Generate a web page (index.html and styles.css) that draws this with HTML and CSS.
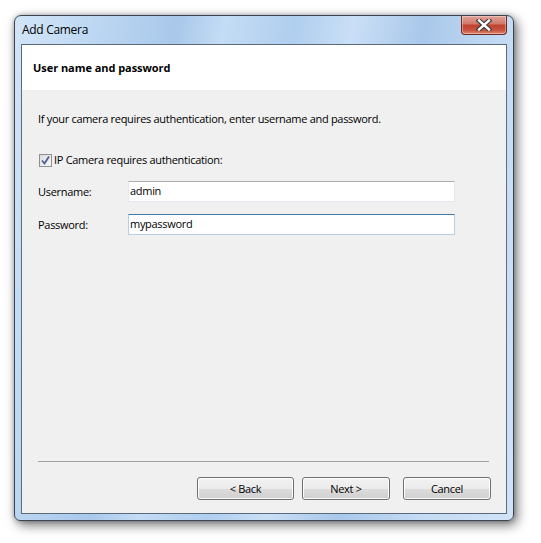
FILE: index.html
```html
<!DOCTYPE html>
<html>
<head>
<meta charset="utf-8">
<link rel="stylesheet" href="styles.css">
</head>
<body>
<div class="window">
  <div class="titlebar">
    <span class="title">Add Camera</span>
    <div class="close">
      <svg width="16" height="12" viewBox="0 0 16 12">
        <path d="M3 1.5 L13 10.5 M13 1.5 L3 10.5" stroke="#3a3a3a" stroke-width="4.6" stroke-linecap="square"/>
        <path d="M3 1.5 L13 10.5 M13 1.5 L3 10.5" stroke="#ffffff" stroke-width="2.4" stroke-linecap="square"/>
      </svg>
    </div>
  </div>
  <div class="client">
    <div class="header">User name and password</div>
    <div class="body">
      <p class="desc">If your camera requires authentication, enter username and password.</p>
      <label class="check-row">
        <span class="checkbox">
          <svg width="13" height="13" viewBox="0 0 13 13">
            <path d="M3 6.5 L5.5 9.5 L10 2.5" fill="none" stroke="#4b5f95" stroke-width="1.8"/>
          </svg>
        </span>
        <span>IP Camera requires authentication:</span>
      </label>
      <div class="field">
        <span class="label">Username:</span>
        <div class="input">admin</div>
      </div>
      <div class="field">
        <span class="label">Password:</span>
        <div class="input focused">mypassword</div>
      </div>
      <div class="spacer"></div>
      <div class="separator"></div>
      <div class="buttons">
        <div class="btn back">&lt; Back</div>
        <div class="btn next">Next &gt;</div>
        <div class="btn cancel">Cancel</div>
      </div>
    </div>
  </div>
</div>
</body>
</html>
```
FILE: styles.css
```css
html, body {
  margin: 0;
  padding: 0;
  background: #ffffff;
}
body {
  width: 541px;
  height: 543px;
  overflow: hidden;
  font-family: "Open Sans", "Noto Sans", sans-serif;
  font-size: 11px;
  letter-spacing: -0.3px;
  color: #000;
}
.window {
  margin: 15px 0 0 14px;
  width: 500px;
  height: 506px;
  box-sizing: border-box;
  border: 1px solid #3b4452;
  border-radius: 7px 7px 6px 6px;
  padding: 0 6px 6px 6px;
  background: linear-gradient(100deg, #d2e5f8 0%, #bdd7f2 14%, #a9c8ea 28%, #c4dcf5 36%, #b0ceee 48%, #cadff6 58%, #a9c8ea 70%, #c4dbf4 84%, #d0e3f7 100%);
  box-shadow: 3px 4px 12px rgba(0,0,0,0.55), 0 0 4px rgba(0,0,0,0.25);
  display: flex;
  flex-direction: column;
}
.titlebar {
  height: 28px;
  display: flex;
  align-items: flex-start;
  justify-content: space-between;
  position: relative;
}
.title {
  margin-top: 6px;
  margin-left: 1px;
  line-height: 16px;
  font-size: 12px;
  letter-spacing: -0.3px;
  color: #000;
}
.close {
  width: 46px;
  height: 19px;
  margin-right: 0;
  box-sizing: border-box;
  border: 1px solid #6d2a22;
  border-top: none;
  border-radius: 0 0 4px 4px;
  background: linear-gradient(to bottom, #e0a196 0%, #d0786a 45%, #c0402c 50%, #c95540 80%, #e08a70 100%);
  display: flex;
  align-items: center;
  justify-content: center;
  box-shadow: inset 0 0 0 1px rgba(255,255,255,0.35);
}
.client {
  flex: 1;
  border: 1px solid #5b6a7c;
  background: #f0f0f0;
  display: flex;
  flex-direction: column;
}
.header {
  height: 45px;
  background: #ffffff;
  display: flex;
  align-items: center;
  padding-left: 11px;
  font-weight: bold;
  letter-spacing: -0.05px;
}
.body {
  flex: 1;
  display: flex;
  flex-direction: column;
  padding: 0 15px 13px 16px;
}
.desc {
  margin: 21px 0 0 0;
  line-height: 16px;
}
.check-row {
  margin-top: 25px;
  display: flex;
  align-items: center;
  gap: 2px;
  line-height: 16px;
  margin-left: 1px;
}
.checkbox {
  width: 13px;
  height: 13px;
  box-sizing: border-box;
  border: 1px solid #8f8f8f;
  background: linear-gradient(135deg, #dcdcdc, #f8f8f8);
  display: flex;
  position: relative;
}
.checkbox svg {
  position: absolute;
  left: -1px;
  top: -1px;
}
.field {
  display: flex;
  align-items: center;
  margin-top: 13px;
}
.field + .field {
  margin-top: 12px;
}
.label {
  width: 90px;
}
.input {
  width: 327px;
  height: 21px;
  box-sizing: border-box;
  background: #fff;
  border: 1px solid #e3e9ef;
  border-top-color: #abadb3;
  padding-left: 1px;
  line-height: 18px;
}
.input.focused {
  border-color: #b5cfe7;
  border-top-color: #3d7bad;
}
.spacer {
  flex: 1;
}
.separator {
  height: 1px;
  background: #a0a0a0;
  margin-right: 2px;
}
.buttons {
  display: flex;
  justify-content: flex-end;
  margin-top: 15px;
}
.btn {
  height: 23px;
  box-sizing: border-box;
  border: 1px solid #707070;
  border-radius: 3px;
  background: linear-gradient(to bottom, #f2f2f2 0%, #ebebeb 50%, #dddddd 51%, #cfcfcf 100%);
  box-shadow: inset 0 0 0 1px #fcfcfc;
  display: flex;
  align-items: center;
  justify-content: center;
  line-height: 16px;
}
.back { width: 97px; }
.next { width: 88px; margin-left: 8px; }
.cancel { width: 88px; margin-left: 13px; }
```
